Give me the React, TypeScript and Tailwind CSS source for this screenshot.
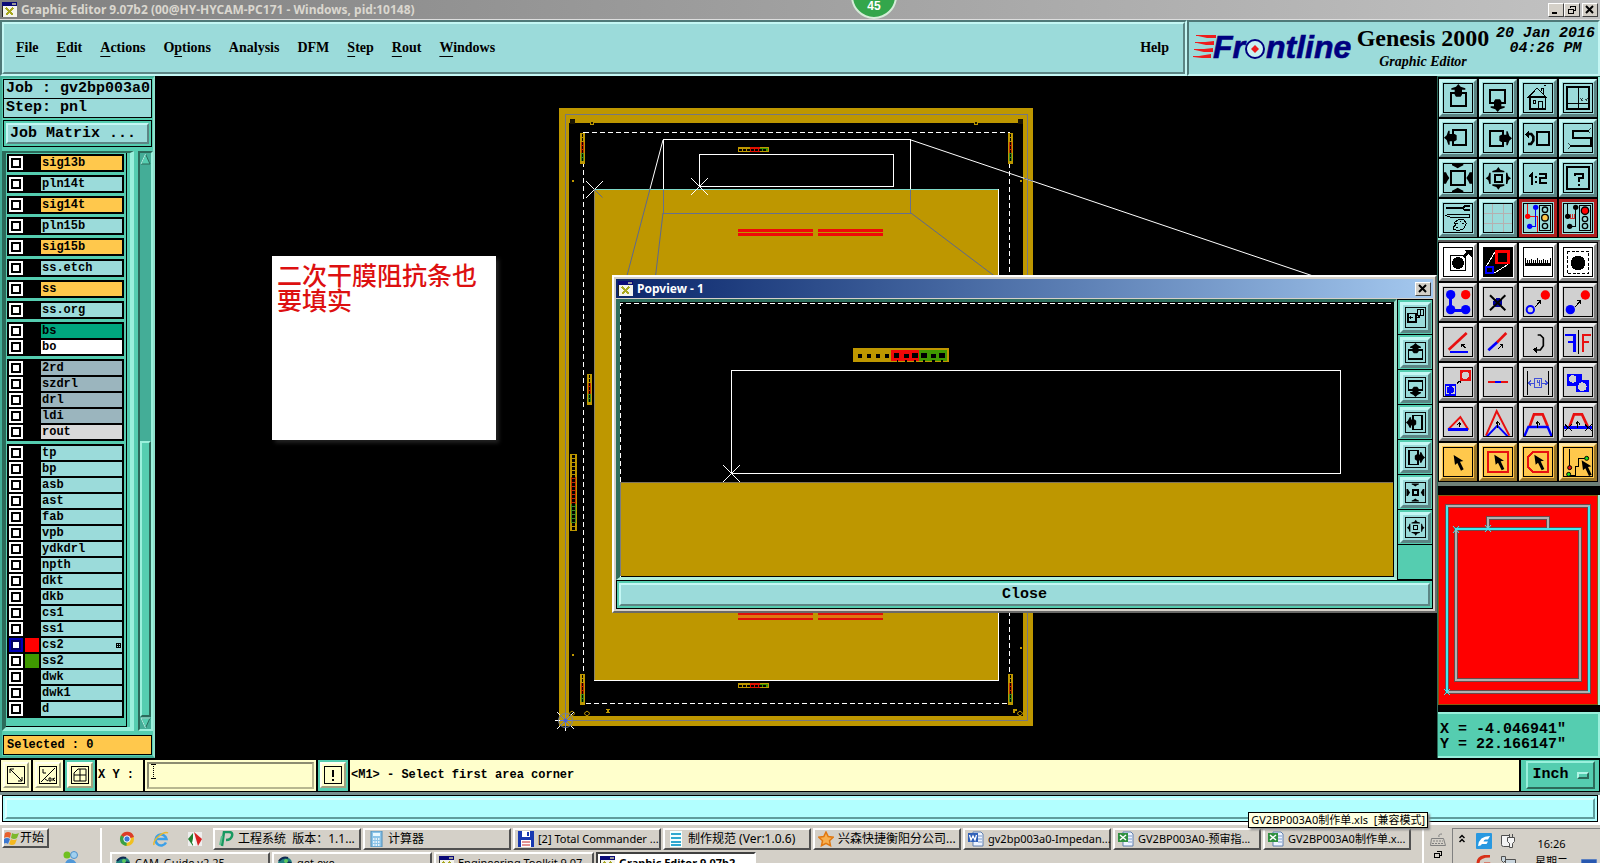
import { useState } from "react";
import type { ReactNode } from "react";

const MONO = "[font-family:'Liberation_Mono',monospace]";
const SERIF = "[font-family:'Liberation_Serif',serif]";
const TAHOMA = "[font-family:'Noto_Sans','Noto_Sans_CJK_SC',sans-serif]";
const CYAN_BEVEL =
  "border-t-[#c4f7f4] border-l-[#c4f7f4] border-r-[#5c8584] border-b-[#5c8584]";

/* ---------- Window chrome ---------- */

function AppIcon() {
  return (
    <svg width="15" height="15" viewBox="0 0 15 15" shapeRendering="crispEdges" className="shrink-0">
      <rect width="15" height="15" fill="#f4f4ec" stroke="#222" />
      <rect width="15" height="4" fill="#0a0a78" />
      <path d="M10 1h4v2h-4z" fill="#999" />
      <path d="M4 6l7 7M11 6l-7 7" stroke="#a8a820" strokeWidth="2" />
    </svg>
  );
}

function WinButton({ label, children }: { label: string; children: ReactNode }) {
  return (
    <button
      aria-label={label}
      className="flex h-[14px] w-4 items-center justify-center border border-t-white border-r-[#404040] border-b-[#404040] border-l-white bg-[#d4d0c8]"
    >
      <svg width="10" height="10" viewBox="0 0 10 10" fill="none" stroke="#000" shapeRendering="crispEdges">
        {children}
      </svg>
    </button>
  );
}

const closeGlyph = <path d="M1 1l7 7M8 1l-7 7" strokeWidth="2" shapeRendering="auto" />;

function TitleBar() {
  return (
    <div className="relative flex h-5 shrink-0 items-center border-b border-[#dedede] bg-linear-to-r from-[#808080] to-[#c2c2c2] pr-[2px] pl-[2px]">
      <AppIcon />
      <h1 className={`ml-1 text-[12px] leading-4 font-bold text-[#dad7cf] ${TAHOMA}`}>
        Graphic Editor 9.07b2 (00@HY-HYCAM-PC171 - Windows, pid:10148)
      </h1>
      <div className="ml-auto flex">
        <WinButton label="Minimize">
          <path d="M1 8h5" strokeWidth="2" />
        </WinButton>
        <WinButton label="Restore">
          <path d="M3 1h6M3.500 1v2M8.500 1v5M6 5.500h3M1 4h6M1.500 4v5M6.500 4v5M1 8.500h6" />
        </WinButton>
        <span className="w-[2px]" />
        <WinButton label="Close">{closeGlyph}</WinButton>
      </div>
      <div className="absolute bottom-0 left-1/2 z-10 flex size-[46px] translate-x-[51px] items-end justify-center rounded-full border-2 border-[#d5ecd8] bg-[#33a64b] pb-1 text-[12px] leading-[14px] font-bold text-white [font-family:'Liberation_Sans',sans-serif]">
        45
      </div>
    </div>
  );
}

/* ---------- Menu and branding ---------- */

const menus: [string, string, string][] = [
  ["", "F", "ile"],
  ["", "E", "dit"],
  ["", "A", "ctions"],
  ["O", "p", "tions"],
  ["Analysis", "", ""],
  ["DFM", "", ""],
  ["", "S", "tep"],
  ["", "R", "out"],
  ["", "W", "indows"],
];

function Logo() {
  return (
    <svg
      width="162"
      height="40"
      viewBox="0 -3 162 40"
      role="img"
      aria-label="Frontline"
      className="shrink-0 overflow-visible"
    >
      <g fill="#ee1c1c">
        <path d="M5 5l18-1v3H14zM4 12l17-2v4h-8zM2 19l18-2v4h-9zM0 26l18-3v4H9z" />
        <path d="M3 4.500h20M2 11.500h19M1 18.500h18M0 25.500h18" stroke="#ee1c1c" />
      </g>
      <g
        fill="#000080"
        fontFamily="'Liberation Sans',sans-serif"
        fontStyle="italic"
        fontWeight="bold"
        fontSize="32"
        stroke="#000080"
        strokeWidth="0.6"
      >
        <text x="20" y="27">Fr</text>
        <text x="73" y="27">ntline</text>
      </g>
      <circle cx="62" cy="18" r="9" fill="#c9f2f0" stroke="#000080" strokeWidth="2" />
      <path d="M62 14l4 4-4 4-4-4z" fill="#ee1c1c" />
    </svg>
  );
}

function Header() {
  return (
    <header className="flex h-14 shrink-0 bg-[#9bdbda] text-black">
      <div className="flex min-w-0 flex-1 border-2 border-t-[#4f7978] border-r-[#c4f7f4] border-b-[#c4f7f4] border-l-[#4f7978]">
        <nav className={`flex flex-1 items-center border-2 pr-[14px] pl-3 pb-[2px] text-[14px] font-bold ${CYAN_BEVEL} ${SERIF}`}>
          <div className="flex gap-[18px]">
            {menus.map(([pre, key, post]) => (
              <button key={pre + key + post}>
                {pre}
                <span className="underline underline-offset-4">{key}</span>
                {post}
              </button>
            ))}
          </div>
          <button className="ml-auto">Help</button>
        </nav>
      </div>
      <div className="flex w-[413px] shrink-0 items-center border-2 border-t-[#4f7978] border-r-[#c4f7f4] border-b-[#c4f7f4] border-l-[#4f7978] pl-1">
        <Logo />
        <div className={`w-[136px] shrink-0 text-center ${SERIF}`}>
          <div className="text-[24px] leading-7 font-bold">Genesis 2000</div>
          <div className="text-[14px] leading-5 font-bold italic">Graphic Editor</div>
        </div>
        <div className={`ml-[5px] h-11 shrink-0 text-center text-[15px] leading-[15px] font-bold italic ${MONO}`}>
          20 Jan 2016
          <br />
          04:26 PM
        </div>
      </div>
    </header>
  );
}

/* ---------- Layer list ---------- */

type Layer = { name: string; tone: string; swatch?: string; active?: boolean };
const A = "bg-[#ffc84c]";
const C = "bg-[#9bdbda]";
const S = "bg-[#9bb5be]";
const cyan = (name: string): Layer => ({ name, tone: C });

const groups: Layer[][] = [
  [{ name: "sig13b", tone: A }],
  [cyan("pln14t")],
  [{ name: "sig14t", tone: A }],
  [cyan("pln15b")],
  [{ name: "sig15b", tone: A }],
  [cyan("ss.etch")],
  [{ name: "ss", tone: A }],
  [cyan("ss.org")],
  [
    { name: "bs", tone: "bg-[#00a77e]" },
    { name: "bo", tone: "bg-white" },
  ],
  [
    { name: "2rd", tone: S },
    { name: "szdrl", tone: S },
    { name: "drl", tone: S },
    { name: "ldi", tone: S },
    { name: "rout", tone: "bg-[#d9d9d9]" },
  ],
  [
    ...["tp", "bp", "asb", "ast", "fab", "vpb", "ydkdrl", "npth", "dkt", "dkb", "cs1", "ss1"].map(cyan),
    { name: "cs2", tone: C, swatch: "bg-[#ff0000]", active: true },
    { name: "ss2", tone: C, swatch: "bg-[#3f9900]" },
    cyan("dwk"),
    cyan("dwk1"),
    cyan("d"),
  ],
];

function LayerRow({ layer }: { layer: Layer }) {
  return (
    <label className="flex h-[14px] gap-[2px]">
      <span className={`flex w-[14px] items-center justify-center ${layer.active ? "bg-[#0000b8]" : "bg-white"}`}>
        <input
          type="checkbox"
          className={`size-[10px] appearance-none border-2 bg-white ${layer.active ? "border-[#000060]" : "border-black"}`}
        />
      </span>
      <span className={`w-[14px] ${layer.swatch ?? ""}`} />
      <span className={`flex flex-1 items-center justify-between pl-px text-[12px] leading-[14px] ${layer.tone}`}>
        {layer.name}
        {layer.active && (
          <svg width="5" height="5" viewBox="0 0 5 5" className="mr-px" shapeRendering="crispEdges">
            <path d="M.5.5h4v4h-4zM2.500 0v5M0 2.500h5" fill="none" stroke="#000" />
          </svg>
        )}
      </span>
    </label>
  );
}

function LayerPanel() {
  return (
    <aside
      className={`flex w-[155px] shrink-0 flex-col border-2 border-t-[#44ad97] border-r-[#8fe0cc] border-b-[#44ad97] border-l-[#44ad97] bg-[#55cdb0] font-bold text-black ${MONO}`}
    >
      <div className="mx-px mt-px border border-black bg-[#9bdbda] text-[15px]">
        <div className="h-[19px] border-b border-black pl-[2px] leading-[18px] whitespace-nowrap">Job : gv2bp003a0</div>
        <div className="h-[18px] pl-[2px] leading-[18px]">Step: pnl</div>
      </div>
      <div className="mx-px mt-[2px] border border-black p-[2px]">
        <button
          className={`block h-[21px] w-full border-2 bg-[#9bdbda] pl-[2px] text-left text-[15px] leading-4 ${CYAN_BEVEL}`}
        >
          Job Matrix ...
        </button>
      </div>
      <div className="mt-1 flex min-h-0 flex-1">
        <div className="flex flex-1 border-t-2 border-r-4 border-b-4 border-l-4 border-t-[#2c6a5a] border-r-[#9af0dc] border-b-[#9af0dc] border-l-[#2c6a5a]">
          <div className="flex flex-1 flex-col gap-[3px] border-r border-b border-black pt-px pl-px">
            {groups.map((group, i) => (
              <div key={i} className="mr-[2px] flex flex-col gap-[2px] bg-black p-[2px]">
                {group.map((layer) => (
                  <LayerRow key={layer.name} layer={layer} />
                ))}
              </div>
            ))}
          </div>
          <div className="w-[3px]" />
        </div>
        <div className="ml-1 flex w-[15px] flex-col border-2 border-t-[#2c6a5a] border-r-[#9af0dc] border-b-[#9af0dc] border-l-[#2c6a5a] bg-[#44ad97]">
          <svg width="11" height="12" viewBox="0 0 11 12">
            <path d="M5.500 1L10 11H1z" fill="#55cdb0" stroke="#2c6a5a" />
            <path d="M5.500 1L1 11" stroke="#b0f5e6" />
          </svg>
          <div className="mt-auto h-[276px] border-t-2 border-r-2 border-b-2 border-l-2 border-t-[#9af0dc] border-r-[#2c6a5a] border-b-[#2c6a5a] border-l-[#9af0dc] bg-[#55cdb0]" />
          <svg width="11" height="12" viewBox="0 0 11 12">
            <path d="M5.500 11L10 1H1z" fill="#55cdb0" stroke="#2c6a5a" />
            <path d="M5.500 11L1 1h9" fill="none" stroke="#b0f5e6" />
          </svg>
        </div>
      </div>
      <div className="mx-px mt-1 mb-px h-5 border border-black bg-[#ffc84c] pl-[3px] text-[12px] leading-[18px]">
        Selected : 0
      </div>
    </aside>
  );
}

/* ---------- Board drawing ---------- */

function Coupon({ x, y, w, h, vertical }: { x: number; y: number; w: number; h: number; vertical?: boolean }) {
  const long = vertical ? h : w;
  const count = Math.floor(long / 4);
  return (
    <g>
      <rect x={x} y={y} width={w} height={h} fill="#be9700" />
      {vertical ? (
        <>
          <rect x={x + 1} y={y + h * 0.3} width={w - 2} height={h * 0.35} fill="#c03000" />
          <rect x={x + 1} y={y + h * 0.65} width={w - 2} height={h * 0.25} fill="#3f8a20" />
        </>
      ) : (
        <>
          <rect x={x + w * 0.4} y={y} width={w * 0.3} height={h} fill="#e01000" />
          <rect x={x + w * 0.7} y={y + 1} width={w * 0.27} height={h - 2} fill="#3f9900" />
        </>
      )}
      {Array.from({ length: count }, (_, i) => (
        <rect
          key={i}
          x={vertical ? x + 2 : x + 1 + i * 4}
          y={vertical ? y + 1 + i * 4 : y + 2}
          width={vertical ? w - 4 : 3}
          height={vertical ? 3 : 2}
          fill="#000"
        />
      ))}
    </g>
  );
}

function Board() {
  return (
    <svg className="absolute inset-0 h-full w-full" shapeRendering="crispEdges" fill="none">
      <g transform="translate(-155 -76)">
        <path d="M559 108h474v618H559zM569 123h454v593H569z" fill="#be9700" fillRule="evenodd" />
        <rect x="565.500" y="114.500" width="462" height="606" stroke="#747680" />
        <rect x="594" y="189" width="405" height="492" fill="#be9700" />
        <path d="M594.500 189.500v491" stroke="#8c8468" />
        <path d="M594 189.500h404" stroke="#7fd8c8" />
        <path d="M998.500 189v491.500H594" stroke="#fff" />
        <rect x="583.500" y="132.500" width="426" height="571" stroke="#fff" strokeDasharray="5 3" />
        <path d="M663.500 189V139.500h247V189M699.500 154.500h194v32h-194z" stroke="#fff" />
        <path d="M663.500 190v23.500h247V190" stroke="#667090" />
        <g shapeRendering="auto">
          <path d="M663 140L650 189M911 140L1393 303" stroke="#fff" />
          <path d="M650 189L620 302M663 213L620 577M911 213L1393 577" stroke="#5c6890" />
          <path d="M1024 178l9 3" stroke="#5c6890" />
          <path d="M586 181l8.500 8.500-8.500 8.500M603 181l-8.500 8.500M691 178l17 17M708 178l-17 17" stroke="#fff" />
          <path d="M594.500 189.500l8 8" stroke="#5c6890" />
        </g>
        <path d="M738 229h75v3h-75zM818 229h65v3h-65zM738 233h75v3h-75zM818 233h65v3h-65z" fill="#f00808" />
        <path d="M738 612h75v3h-75zM818 612h65v3h-65zM738 618h75v2h-75zM818 618h65v2h-65z" fill="#e01008" />
        <path d="M738 615h75v3h-75zM818 615h65v3h-65z" fill="#e07810" />
        <Coupon x={738} y={147} w={31} h={5} />
        <Coupon x={738} y={683} w={31} h={5} />
        <Coupon x={580} y={133} w={5} h={31} vertical />
        <Coupon x={1008} y={133} w={5} h={31} vertical />
        <Coupon x={580} y={674} w={5} h={31} vertical />
        <Coupon x={1008} y={674} w={5} h={31} vertical />
        <Coupon x={587} y={374} w={5} h={31} vertical />
        <Coupon x={570} y={454} w={7} h={77} vertical />
        <path
          d="M572 180h2v2h-2zM1020 180h2v2h-2zM572 654h2v2h-2zM1020 647h2v2h-2zM590 123h4v2h-4zM974 123h4v2h-4zM606 709h4v1h-1v2h1v1h-4v-1h1v-2h-1zM1013 709h4v2h-2v2h-2z"
          fill="#be9700"
        />
        <path d="M570 119h5v5h-5zM1018 119h5v5h-5z" fill="#1a1400" />
        <path d="M591 122h2v2h-2zM975 122h2v2h-2z" fill="#1a1400" />
        <g shapeRendering="auto">
          <path d="M587 711l3 2.500-3 2.500-3-2.500zM1020 711l3 2.500-3 2.500-3-2.500zM572 711l3 2.500-3 2.500-3-2.500z" stroke="#be9700" />
          <path d="M555 720.500h5M565.500 727v4M557 712l4 4M557 729l4-4M574 729l-4-4M574 712l-4 4" stroke="#fff" />
          <path d="M560 720.500h12M565.500 713v15M560 715l11 11M571 715l-11 11" stroke="#6078d0" />
          <circle cx="565.500" cy="720.500" r="7" stroke="#74809a" />
          <circle cx="565.500" cy="720.500" r="2" fill="#4060e0" />
        </g>
      </g>
    </svg>
  );
}

/* ---------- Icons on a 90-unit grid ---------- */

const arrowBox = (
  <>
    <path d="M24 30h45v39H24z" strokeWidth="6" />
    <path
      d="M46 3l7 8 14 5v4H57v15l-4 6H39l-4-6V20H25v-4l14-5z"
      fill="#000"
      stroke="none"
      shapeRendering="auto"
    />
  </>
);
const turn = (deg: number) => <g transform={`rotate(${deg} 45 45)`}>{arrowBox}</g>;

const popArrow = (deg: number) => (
  <g transform={`rotate(${deg} 45 45)`}>
    <path d="M15 36h60v36H15z" strokeWidth="8" />
    <path d="M45 4l9 9 14 7v6H58v16l-6 6H38l-6-6V26H22v-6l14-7z" fill="#000" stroke="none" shapeRendering="auto" />
  </g>
);

const pointer = (
  <path d="M34 28l4 30 7-6 11 23 8-4-11-23 10-2z" fill="#000" stroke="none" shapeRendering="auto" />
);
const outArrows = (
  <path
    d="M46 12l6 8 12 4v4H28v-4l12-4zM46 80l-6-8-12-4v-4h36v4l-12 4zM8 46l8-6 3-11h4v34h-4l-3-11zM84 46l-8-6-3-11h-4v34h4l3-11z"
    fill="#000"
    stroke="none"
    shapeRendering="auto"
  />
);
const inArrows = (
  <path
    d="M44 16l-8-5-9-4V2h34v5l-9 4zM44 74l-8 5-9 4v5h34v-5l-9-4zM19 45l-6-9-4-8H2v34h7l4-8zM70 45l6-9 4-8h7v34h-7l-4-8z"
    fill="#000"
    stroke="none"
    shapeRendering="auto"
  />
);
const arrowUp = <path d="M44 62V44M38 52l6-8 7 8" strokeWidth="3" />;
const diag = (x: number, y: number) => (
  <path d={`M${x} ${y + 20}l16-18M${x + 7} ${y}h10v10`} strokeWidth="3" />
);

const viewIcons: [string, ReactNode][] = [
  ["Pan up", arrowBox],
  ["Pan down", turn(180)],
  [
    "Home",
    <>
      <path d="M14 44L42 15l30 30M18 42h52M21 44v34h46V44" strokeWidth="4" />
      <path d="M18 78h51" strokeWidth="6" />
      <path d="M54 24V15h8v18M62 10l6-4M30 53h7v7h-7zM45 77V54h12v23" strokeWidth="3" />
    </>,
  ],
  [
    "Set coordinates",
    <>
      <path d="M12 12h66v66H12z" strokeWidth="6" />
      <path d="M46 12v66M12 60h66" strokeWidth="3" />
      <path d="M52 46l8 9M60 46l-8 9M65 46l4 4 4-4M69 50v5" strokeWidth="2" />
    </>,
  ],
  ["Pan left", turn(-90)],
  ["Pan right", turn(90)],
  [
    "Previous view",
    <>
      <path d="M42 27h36v39H42z" strokeWidth="6" />
      <path d="M13 33h12l6 8v12l-7 10h-9" strokeWidth="8" shapeRendering="auto" />
      <path d="M6 34l12-12v23z" fill="#000" stroke="none" />
    </>,
  ],
  [
    "Serpentine",
    <>
      <path d="M78 24H30v21h54v24H22" strokeWidth="6" />
      <path d="M76 24l6-8M76 24l6 6M24 69l-9-9M24 69l-9 8" strokeWidth="2" />
    </>,
  ],
  [
    "Zoom in",
    <>
      <path d="M24 24h42v42H24z" strokeWidth="6" />
      {inArrows}
    </>,
  ],
  [
    "Zoom out",
    <>
      <path d="M36 36h21v21H36z" strokeWidth="6" />
      {outArrows}
    </>,
  ],
  ["Zoom ratio", <path d="M18 42l9-9v33M39 39v6M39 54v6M48 33h21v12H51v15h21" strokeWidth="6" />],
  [
    "Query",
    <>
      <path d="M12 12h66v66H12z" strokeWidth="6" />
      <path d="M36 39v-6h24v12H48v12M48 62v7" strokeWidth="6" />
    </>,
  ],
  [
    "Options",
    <>
      <path d="M8 15h50" strokeWidth="8" />
      <path d="M80 9H66l-8 6 8 7h14" strokeWidth="6" />
      <path d="M8 37l12-4h59v9H20z" strokeWidth="3" />
      <path d="M34 58l14-9 15 1 7 12-8 15-16 6-14-4-1-8 8-5z" strokeWidth="3" />
      <path d="M40 62h5M50 56h5M58 62h4M38 72h6" strokeWidth="3" />
    </>,
  ],
  ["Grid", <path d="M29 3v84M60 3v84M3 30h84M3 60h84" stroke="#b5b0b0" strokeWidth="3" />],
  [
    "Net on",
    <>
      <path d="M14 0v40h28v48" stroke="#f01010" strokeWidth="3" />
      <path d="M38 14v56H20" stroke="#0000ff" strokeWidth="4" />
      <g stroke="none" shapeRendering="auto">
        <circle cx="14" cy="40" r="8" fill="#f00" />
        <circle cx="38" cy="13" r="8" fill="#00f" />
        <circle cx="20" cy="70" r="8" fill="#00f" />
      </g>
      <path d="M49 8h34v74H49z" strokeWidth="3" />
      <g strokeWidth="4" shapeRendering="auto">
        <circle cx="66" cy="20" r="8" />
        <circle cx="66" cy="44" r="10" fill="#ffc84c" />
        <circle cx="66" cy="69" r="8" />
      </g>
    </>,
  ],
  [
    "Net off",
    <>
      <path d="M14 0v40M38 14v56H20" strokeWidth="4" />
      <path d="M20 46h16M23 46V34M29 46V34M35 46V34" stroke="#d03030" strokeWidth="3" />
      <g fill="#000" stroke="none" shapeRendering="auto">
        <circle cx="14" cy="40" r="8" />
        <circle cx="38" cy="13" r="8" />
        <circle cx="20" cy="70" r="8" />
      </g>
      <path d="M49 8h34v74H49z" strokeWidth="3" />
      <g strokeWidth="4" shapeRendering="auto">
        <circle cx="66" cy="23" r="11" fill="#f00" />
        <circle cx="66" cy="48" r="8" />
        <circle cx="66" cy="69" r="8" />
      </g>
    </>,
  ],
];

const B = "#0000ff";
const R = "#e81010";

const editIcons: [string, string, ReactNode][] = [
  [
    "Feature select",
    "w",
    <>
      <path d="M23 26h44v44H23z" strokeWidth="3" />
      <circle cx="45" cy="48" r="18" fill="#000" stroke="none" />
      <path d="M62 30l14-14" strokeWidth="9" />
      <path d="M62 8h24v22z" fill="#000" stroke="none" />
    </>,
  ],
  [
    "Popview",
    "k",
    <>
      <path d="M0 0h90v90H0z" fill="#000" stroke="none" />
      <path d="M9 60L40 8M30 80l46-28" stroke="#fff" strokeWidth="3" />
      <path d="M40 13h36v34H40z" stroke="#f00" strokeWidth="7" />
      <path d="M10 60h19v19H10z" stroke={B} strokeWidth="6" />
    </>,
  ],
  [
    "Measure",
    "w",
    <>
      <path d="M7 51h76" strokeWidth="9" />
      <path
        d="M8 34v20M14 40v12M20 40v12M26 36v16M32 40v12M38 40v12M44 34v18M50 40v12M56 40v12M62 36v16M68 40v12M74 40v12M81 34v18"
        strokeWidth="3"
      />
    </>,
  ],
  [
    "Snap",
    "w",
    <>
      <path d="M12 13h64v66H12z" strokeWidth="3" strokeDasharray="9 5" />
      <circle cx="45" cy="48" r="22" fill="#000" stroke="none" />
    </>,
  ],
  [
    "Connect",
    "g",
    <>
      <path d="M23 23v46h44" stroke={B} strokeWidth="9" />
      <g stroke="none" fill={B} shapeRendering="auto">
        <circle cx="23" cy="23" r="14" />
        <circle cx="23" cy="68" r="14" />
        <circle cx="68" cy="68" r="14" />
        <circle cx="68" cy="23" r="14" fill="#f00" />
      </g>
    </>,
  ],
  [
    "Delete",
    "g",
    <>
      <circle cx="44" cy="47" r="14" fill="#000098" stroke="none" />
      <path d="M21 25l46 45M67 25L21 70" strokeWidth="6" shapeRendering="auto" />
    </>,
  ],
  [
    "Copy",
    "g",
    <>
      <circle cx="22" cy="68" r="11" stroke={B} strokeWidth="6" shapeRendering="auto" />
      <circle cx="67" cy="24" r="14" fill="#f00" stroke="none" shapeRendering="auto" />
      {diag(36, 40)}
    </>,
  ],
  [
    "Move",
    "g",
    <>
      <circle cx="22" cy="68" r="14" fill={B} stroke="none" shapeRendering="auto" />
      <circle cx="67" cy="24" r="14" fill="#f00" stroke="none" shapeRendering="auto" />
      {diag(36, 40)}
    </>,
  ],
  [
    "Angle",
    "g",
    <>
      <path d="M17 68l54-50" stroke={R} strokeWidth="8" shapeRendering="auto" />
      <path d="M20 75h54" stroke={B} strokeWidth="8" />
      <path d="M68 63L56 51M56 60v-9h9" strokeWidth="3" />
    </>,
  ],
  [
    "Stretch",
    "g",
    <>
      <path d="M16 70l28-26" stroke={B} strokeWidth="8" shapeRendering="auto" />
      <path d="M42 46l28-28" stroke={R} strokeWidth="8" shapeRendering="auto" />
      <path d="M46 66l12-13M50 53h9v9" strokeWidth="3" />
    </>,
  ],
  [
    "Rotate",
    "g",
    <>
      <path d="M44 24h8l9 9v23l-9 13H36" strokeWidth="5" shapeRendering="auto" />
      <path d="M30 68l11-9v18z" fill="#000" stroke="none" />
    </>,
  ],
  [
    "Mirror",
    "g",
    <>
      <path d="M7 24h27v51M14 45h20" stroke={B} strokeWidth="7" />
      <path d="M83 24H59v51M59 45h20" stroke={R} strokeWidth="7" />
      <path d="M46 10v72" strokeWidth="3" />
    </>,
  ],
  [
    "Change symbol",
    "g",
    <>
      <path d="M7 54h30v30H7z" stroke={B} strokeWidth="4" />
      <circle cx="22" cy="69" r="11" fill={B} stroke="none" />
      <path d="M50 8h34v34H50z" fill={R} stroke="none" />
      <circle cx="67" cy="25" r="11" fill="#d0d0d0" stroke="none" />
      <path d="M42 50l8-8M44 42h7v7" strokeWidth="3" />
    </>,
  ],
  [
    "Segment",
    "g",
    <>
      <path d="M14 45h62" stroke={R} strokeWidth="8" />
      <path d="M36 45h18" stroke={B} strokeWidth="8" />
    </>,
  ],
  [
    "Gap",
    "g",
    <>
      <path d="M14 13v70M77 13v70" strokeWidth="3" />
      <path
        d="M35 33h20v28H35zM17 48h18M55 48h19M24 41l-7 7 7 7M67 41l7 7-7 7M42 38v9h8M50 38v19"
        stroke="#4050d8"
        strokeWidth="3"
      />
    </>,
  ],
  [
    "Merge",
    "g",
    <>
      <path d="M12 20h44v18h21v38H40V58H12z" fill={B} stroke="none" />
      <circle cx="29" cy="36" r="11" fill="#d0d0d0" stroke="none" />
      <circle cx="58" cy="59" r="15" fill="#d0d0d0" stroke={B} strokeWidth="4" />
    </>,
  ],
  [
    "Peak",
    "g",
    <>
      <path d="M15 68l37-38 24 38" stroke={R} strokeWidth="6" shapeRendering="auto" />
      <path d="M14 68h62" stroke={B} strokeWidth="8" />
      <path d="M49 60V48M43 53l6-6 6 6" strokeWidth="3" />
    </>,
  ],
  [
    "Raise",
    "g",
    <>
      <path d="M9 86l32-74 38 74" stroke={R} strokeWidth="6" shapeRendering="auto" />
      <path d="M12 88l31-32 31 32" stroke={B} strokeWidth="6" shapeRendering="auto" />
      {arrowUp}
    </>,
  ],
  [
    "Trapezoid",
    "g",
    <>
      <path d="M20 58l13-36h26l15 36" stroke={R} strokeWidth="8" shapeRendering="auto" />
      <path d="M4 88l12-28h58l12 28" stroke={B} strokeWidth="7" shapeRendering="auto" />
      {arrowUp}
    </>,
  ],
  [
    "Trapezoid line",
    "g",
    <>
      <path d="M20 58l13-36h24l17 36" stroke={R} strokeWidth="8" shapeRendering="auto" />
      <path d="M3 61h84" stroke={B} strokeWidth="7" />
      <path d="M6 53l20 18M26 53L6 71M66 53l20 18M86 53L66 71" strokeWidth="3" />
      {arrowUp}
    </>,
  ],
  ["Select", "o", <g transform="translate(-2 -4)">{pointer}</g>],
  [
    "Select in frame",
    "o",
    <>
      <path d="M15 15h60v60H15z" stroke={R} strokeWidth="6" />
      <g transform="translate(0 -5)">{pointer}</g>
    </>,
  ],
  [
    "Select in polygon",
    "o",
    <>
      <path d="M31 15h44v60H31L15 60V29z" stroke={R} strokeWidth="6" />
      <g transform="translate(0 -5)">{pointer}</g>
    </>,
  ],
  [
    "Select net",
    "o",
    <>
      <path d="M20 6v56M17 84h20V58h8V34h24" strokeWidth="3" />
      <g strokeWidth="3" shapeRendering="auto">
        <circle cx="20" cy="62" r="6" fill={R} />
        <circle cx="17" cy="82" r="6" fill="#20e020" />
        <circle cx="71" cy="34" r="6" fill="#20e020" />
      </g>
      <g transform="translate(22 12)">{pointer}</g>
    </>,
  ],
];

const toneClass: Record<string, string> = {
  c: "bg-[#9bdbda] border-t-[#c4f7f4] border-l-[#c4f7f4] border-r-[#5c8584] border-b-[#5c8584]",
  r: "bg-[#9bdbda] border-[#b02020]",
  w: "bg-white border-t-white border-l-white border-r-[#8c8c8c] border-b-[#8c8c8c]",
  k: "bg-white border-t-white border-l-white border-r-[#8c8c8c] border-b-[#8c8c8c]",
  g: "bg-[#d0d0d0] border-t-[#ececec] border-l-[#ececec] border-r-[#7c7c7c] border-b-[#7c7c7c]",
  o: "bg-[#ffc84c] border-t-[#ffe6a4] border-l-[#ffe6a4] border-r-[#9a7628] border-b-[#9a7628]",
};

function ToolButton({ label, tone, children }: { label: string; tone: string; children: ReactNode }) {
  return (
    <button
      aria-label={label}
      className={`flex size-[38px] items-center justify-center border-[3px] ${toneClass[tone]}`}
    >
      <svg width="30" height="30" viewBox="0 0 90 90" fill="none" stroke="#000" shapeRendering="crispEdges">
        {children}
        {tone !== "k" && <path d="M1.500 1.500h87v87h-87z" strokeWidth="3" />}
      </svg>
    </button>
  );
}

function RightPanel() {
  return (
    <aside className="flex w-[163px] shrink-0 flex-col border-t border-l border-[#2c6a5a] bg-black">
      <div className="grid grid-cols-[repeat(4,38px)] gap-[2px] border-r-2 border-b-2 border-[#9af0dc] pt-[2px] pb-px pl-px">
        {viewIcons.map(([label, art], i) => (
          <ToolButton key={label} label={label} tone={i > 13 ? "r" : "c"}>
            {art}
          </ToolButton>
        ))}
      </div>
      <div className="grid grid-cols-[repeat(4,38px)] gap-[2px] border-t-2 border-r-2 border-b-4 border-t-[#5a5a5a] border-r-[#7c7c7c] border-b-[#6e8078] pt-px pb-px pl-px">
        {editIcons.map(([label, tone, art]) => (
          <ToolButton key={label} label={label} tone={tone}>
            {art}
          </ToolButton>
        ))}
      </div>
      <div className="mt-[9px] mb-[7px] min-h-0 flex-1 border-r-2 border-[#9af0dc]">
        <svg
          className="block h-full w-full"
          viewBox="0 0 160 210"
          preserveAspectRatio="none"
          fill="none"
          shapeRendering="crispEdges"
        >
          <rect width="160" height="210" fill="#ff0000" />
          <rect x="0.500" y="0.500" width="159" height="209" stroke="#8a5a10" />
          <g strokeWidth="4" stroke="#6a4a4a">
            <rect x="9" y="11" width="142" height="186" />
            <rect x="50" y="23" width="60" height="11" />
            <rect x="18" y="34" width="124" height="151" />
          </g>
          <g strokeWidth="2" stroke="#b0b0b0">
            <rect x="9" y="11" width="142" height="186" />
            <rect x="50" y="23" width="60" height="11" />
            <rect x="18" y="34" width="124" height="151" />
          </g>
          <path d="M9 11v186M151 11v186M17 34h125" stroke="#40e8f0" strokeWidth="2" />
          <path
            d="M15 31l6 7M21 31l-6 7M47 30l6 7M53 30l-6 7M6 194l6 6M12 194l-6 6"
            stroke="#40e8f0"
            shapeRendering="auto"
          />
        </svg>
      </div>
      <output
        className={`block h-[46px] border-t-2 border-r-2 border-b-2 border-t-[#9af0dc] border-r-[#9af0dc] border-b-[#9af0dc] bg-[#55cdb0] pt-2 pl-[2px] text-[15px] leading-[15px] font-bold whitespace-pre text-black ${MONO}`}
      >
        {'X = -4.046941"\nY = 22.166147"'}
      </output>
    </aside>
  );
}

/* ---------- Popview window ---------- */

const popIcons: [string, ReactNode][] = [
  [
    "Detach",
    <>
      <path d="M12 28h34v36H12z" strokeWidth="8" />
      <path d="M54 11h24v27H54zM66 12v22" strokeWidth="5" />
      <path d="M20 45h16M27 38l-7 7 7 7M46 45h14V38" strokeWidth="5" />
    </>,
  ],
  ["Up", popArrow(0)],
  ["Down", popArrow(180)],
  ["Left", popArrow(-90)],
  ["Right", popArrow(90)],
  [
    "Shrink",
    <>
      <path d="M35 35h20v20H35z" strokeWidth="6" />
      <g transform="translate(45 45) scale(0.9) translate(-45 -45)">{inArrows}</g>
    </>,
  ],
  [
    "Grow",
    <>
      <path d="M37 37h16v16H37z" strokeWidth="5" />
      {outArrows}
    </>,
  ],
];

function Popview() {
  return (
    <section
      aria-label="Popview"
      className="absolute top-[199px] right-0 left-[457px] flex h-[338px] flex-col border-2 border-t-white border-r-[#6a6a68] border-b-[#6a6a68] border-l-white bg-[#d4d0c8] p-[2px]"
    >
      <div className="flex h-[19px] shrink-0 items-center bg-linear-to-r from-[#0c266b] to-[#a5c9ef] px-[2px]">
        <AppIcon />
        <h2 className={`ml-1 text-[12px] leading-4 font-bold text-white ${TAHOMA}`}>Popview - 1</h2>
        <div className="ml-auto">
          <WinButton label="Close Popview">{closeGlyph}</WinButton>
        </div>
      </div>
      <div className="mt-px flex min-h-0 flex-1">
        <div className="min-w-0 flex-1 border-t-[3px] border-r-[3px] border-b-[3px] border-l-4 border-t-[#2f6e5d] border-r-[#9edfcd] border-b-[#b0f0dd] border-l-[#2f6e5d] bg-black">
          <svg className="block h-full w-full" fill="none" shapeRendering="crispEdges">
            <g transform="translate(-620 -302)">
              <path d="M620 482h773v94H620z" fill="#be9700" />
              <path d="M620 482.500h773" stroke="#80745c" />
              <path d="M620.500 578V303.500H1393" stroke="#fff" strokeDasharray="5 3" />
              <path d="M620.500 483v93" stroke="#7c7c80" />
              <path d="M731.500 370.500h609v103h-609z" stroke="#fff" />
              <path d="M723 465l17 17M740 465l-17 17" stroke="#fff" shapeRendering="auto" />
              <rect x="853" y="348" width="96" height="14" fill="#be9700" />
              <rect x="891" y="350" width="28" height="11" fill="#f00808" />
              <rect x="919" y="350" width="28" height="11" fill="#3f9900" />
              <path
                d="M858 354h4v4h-4zM867 354h4v4h-4zM876 354h4v4h-4zM885 354h4v4h-4zM894 353h5v5h-5zM904 354h5v4h-5zM912 353h6v5h-6zM921 353h6v5h-6zM931 354h5v4h-5zM939 353h6v5h-6zM897 360h1v2h-1zM905 360h2v2h-2zM914 360h2v2h-2zM923 360h2v2h-2zM932 360h3v2h-3zM941 360h2v2h-2z"
                fill="#000"
              />
            </g>
          </svg>
        </div>
        <div className="flex w-9 shrink-0 flex-col border border-black bg-[#55cdb0]">
          {popIcons.map(([label, art]) => (
            <div key={label} className="flex h-[35px] shrink-0 items-center justify-center border-b border-black">
              <button
                aria-label={label}
                className={`flex size-[31px] items-center justify-center border-[3px] bg-[#9bdbda] ${CYAN_BEVEL}`}
              >
                <svg width="21" height="21" viewBox="0 0 90 90" fill="none" stroke="#000" shapeRendering="crispEdges">
                  {art}
                  <path d="M2 2h86v86H2z" strokeWidth="4" />
                </svg>
              </button>
            </div>
          ))}
        </div>
      </div>
      <div className="shrink-0 border border-black bg-[#55cdb0] p-[2px]">
        <button
          className={`block h-[23px] w-full border-2 bg-[#9bdbda] text-[15px] leading-5 font-bold text-black ${CYAN_BEVEL} ${MONO}`}
        >
          Close
        </button>
      </div>
    </section>
  );
}

/* ---------- Status rows ---------- */

const CREAM_BEVEL = "border-t-[#fffff0] border-l-[#fffff0] border-r-[#a0a080] border-b-[#a0a080]";

function SmallTool({ label, active, children }: { label: string; active?: boolean; children: ReactNode }) {
  return (
    <div
      className={`flex h-[31px] w-[30px] shrink-0 items-center justify-center ${active ? "bg-[#55cdb0]" : "bg-[#ffffcc]"}`}
    >
      <button
        aria-label={label}
        className={`flex size-[26px] items-center justify-center border-2 bg-[#ffffcc] ${CREAM_BEVEL}`}
      >
        <svg width="18" height="18" viewBox="0 0 18 18" fill="none" stroke="#000">
          <path d="M.5.5h17v17H.5z" shapeRendering="crispEdges" />
          {children}
        </svg>
      </button>
    </div>
  );
}

function StatusBar() {
  const [xy, setXy] = useState("");
  return (
    <div className={`flex h-[34px] shrink-0 items-center gap-[2px] bg-black pl-px text-[12px] font-bold text-black ${MONO}`}>
      <SmallTool label="Line mode">
        <path d="M3 7V3h4M3 3l12 12M15 11v4h-4" />
      </SmallTool>
      <SmallTool label="Angle mode">
        <path d="M2 16L16 2M4 3v4h3M6 13l3 2M10 12h2v3h-2zM14 12v3M16 12l-2 1 2 2" />
      </SmallTool>
      <SmallTool label="Grid mode" active>
        <path d="M3 15V7l4-4h8v12zM9 3v12M3 9h12" />
      </SmallTool>
      <label htmlFor="xy" className="flex h-[31px] w-[46px] items-center bg-[#ffffcc] pl-px whitespace-pre">
        X Y :
      </label>
      <div className="relative flex h-[31px] w-[171px] items-center bg-[#ffffcc] px-[2px]">
        <input
          id="xy"
          value={xy}
          onChange={(e) => setXy(e.target.value)}
          className="h-[27px] w-full border-2 border-t-[#8c8c70] border-r-[#b8b890] border-b-[#b8b890] border-l-[#8c8c70] bg-[#ffffcc] px-1 outline-none"
        />
        <svg
          width="5"
          height="15"
          viewBox="0 0 5 15"
          className="pointer-events-none absolute top-1 left-[6px]"
          stroke="#000"
          shapeRendering="crispEdges"
        >
          <path d="M2.500 0v15" strokeDasharray="1 1" />
          <path d="M0 .5h2M3 .5h2M0 14.500h2M3 14.500h2" />
        </svg>
      </div>
      <SmallTool label="Apply" active>
        <path d="M9 4v7M9 13v2" strokeWidth="2" />
      </SmallTool>
      <output className="flex h-[31px] flex-1 items-center bg-[#ffffcc] pl-px">&lt;M1&gt; - Select first area corner</output>
      <div className="flex h-[31px] w-[79px] items-center justify-center border-r border-black bg-[#55cdb0]">
        <div className="relative flex items-center border-2 border-t-[#9af0dc] border-r-[#2c6a5a] border-b-[#2c6a5a] border-l-[#9af0dc]">
          <select
            aria-label="Units"
            className="h-6 w-[65px] appearance-none bg-transparent pl-[5px] text-[15px] font-bold outline-none"
          >
            <option>Inch</option>
            <option>mm</option>
          </select>
          <span className="pointer-events-none absolute right-1 h-[7px] w-3 border-2 border-t-[#b0f5e6] border-r-[#2c6a5a] border-b-[#2c6a5a] border-l-[#b0f5e6]" />
        </div>
      </div>
    </div>
  );
}

function MessageBar() {
  return (
    <div className="h-8 shrink-0 border-t-[3px] border-[#789090] bg-white px-[2px] pb-[2px]">
      <div className="h-full border border-black bg-[#b2ffff] p-[2px]">
        <div className="h-full border-2 border-t-[#dcffff] border-r-[#5f9d9d] border-b-[#5f9d9d] border-l-[#dcffff]" />
      </div>
    </div>
  );
}

/* ---------- Desktop taskbar ---------- */

function TaskIcon({ kind }: { kind: string }) {
  return (
    <svg width="16" height="16" viewBox="0 0 16 16" className="shrink-0">
      {kind === "start" && (
        <>
          <path d="M1 3q3-2 6 0L6 8Q3 6 0 8z" fill="#e8602c" />
          <path d="M8 3q3 2 7 0l-2 5q-3 2-6 0z" fill="#7cb82c" />
          <path d="M0 9q3-2 6 0l-2 5q-2-2-5 0z" fill="#3c78d0" />
          <path d="M7 9q3 2 6 0l-2 5q-3 2-6 0z" fill="#f4b820" />
        </>
      )}
      {kind === "chrome" && (
        <>
          <circle cx="8" cy="8" r="7" fill="#f0c020" />
          <path d="M8 8L2 4.500A7 7 0 0 1 15 6z" fill="#dc3c28" />
          <path d="M8 8L2 4.300A7 7 0 0 0 7.500 15z" fill="#38a048" />
          <circle cx="8" cy="8" r="3.200" fill="#3c78d8" stroke="#fff" />
        </>
      )}
      {kind === "ie" && (
        <>
          <path d="M13 11.500A5.500 5.500 0 1 1 13.500 8H4" fill="none" stroke="#3ca0e8" strokeWidth="2.500" />
          <path d="M1 14Q0 10 6 5t9-3" fill="none" stroke="#e8b830" strokeWidth="1.500" />
        </>
      )}
      {kind === "kite" && (
        <>
          <rect x="1" y="1" width="14" height="14" fill="#eee" />
          <path d="M7 1l8 7-4 7z" fill="#d82020" />
          <path d="M6 2L1 8l5 7z" fill="#208030" />
          <path d="M7 3l1 12-3-3z" fill="#fff" />
        </>
      )}
      {kind === "green" && (
        <>
          <path d="M4 15L6 1h5q4 0 3 4t-6 4" fill="none" stroke="#189860" strokeWidth="2.500" />
          <path d="M2 14l2-9" stroke="#60c090" strokeWidth="2" />
        </>
      )}
      {kind === "calc" && (
        <>
          <rect x="3" y="0" width="11" height="16" fill="#8cc4e8" stroke="#4c8cb8" />
          <path d="M5 2h7v3H5z" fill="#e8f8ff" />
          <path d="M5 8h7M5 11h7M5 14h7" stroke="#fff" strokeWidth="1.500" strokeDasharray="1.500 1" />
        </>
      )}
      {kind === "disk" && (
        <>
          <path d="M0 0h16v16H0z" fill="#1838b0" />
          <path d="M4 0h8v6H4zM3 9h10v7H3z" fill="#fff" />
          <path d="M4 11h8M4 14h8" stroke="#c82828" />
          <path d="M9 1h2v4H9z" fill="#1838b0" />
        </>
      )}
      {kind === "doc" && (
        <>
          <path d="M2 0h12v16H2z" fill="#f4ffff" />
          <path d="M3 3h10M3 7h10M3 11h10M3 14h10" stroke="#30a8d0" strokeWidth="2" />
        </>
      )}
      {kind === "star" && (
        <path
          d="M8 1l2.200 4.600 5 .6-3.700 3.500 1 5L8 12.300l-4.500 2.400 1-5L.8 6.200l5-.6z"
          fill="#f8b050"
          stroke="#e07810"
          strokeWidth="1.500"
        />
      )}
      {(kind === "word" || kind === "excel") && (
        <>
          <path d="M5 1h8l2 2v12H5z" fill="#eef4ff" stroke="#6080b0" />
          <path d="M10 5h4M10 8h4M10 11h4" stroke="#7898c8" />
          <rect x="0" y="2" width="10" height="9" fill={kind === "word" ? "#3060b8" : "#309040"} />
          {kind === "word" ? (
            <path d="M1.500 4l1.500 5 2-4 2 4 1.500-5" fill="none" stroke="#fff" strokeWidth="1.300" />
          ) : (
            <path d="M2 4l6 5M8 4L2 9" stroke="#fff" strokeWidth="1.500" />
          )}
        </>
      )}
      {kind === "bug" && (
        <>
          <ellipse cx="8" cy="8" rx="7" ry="6" fill="#208080" />
          <path d="M2 6q4-5 9-3M10 8q4-2 5 3" fill="none" stroke="#102850" strokeWidth="2" />
          <circle cx="9" cy="6" r="2" fill="#60c860" />
        </>
      )}
      {kind === "people" && (
        <>
          <circle cx="4" cy="4" r="3.500" fill="#70c020" />
          <circle cx="11" cy="4" r="3.500" fill="#a0d0f0" stroke="#5090c8" />
          <path d="M1 16q2-9 7-8t7 8z" fill="#5098d8" />
        </>
      )}
    </svg>
  );
}

const RAISED = "border-2 border-t-white border-l-white border-r-[#505050] border-b-[#505050] bg-[#d4d0c8]";

const CJK_SIZE = "text-[12px]";
const LATIN_SIZE = "text-[11px]";

const tasks: [string, string, string][] = [
  ["green", "工程系统  版本：1.1...", CJK_SIZE],
  ["calc", "计算器", CJK_SIZE],
  ["disk", "[2] Total Commander ...", LATIN_SIZE],
  ["doc", "制作规范 (Ver:1.0.6)", CJK_SIZE],
  ["star", "兴森快捷衡阳分公司...", CJK_SIZE],
  ["word", "gv2bp003a0-Impedan...", LATIN_SIZE],
  ["excel", "GV2BP003A0-预审指...", LATIN_SIZE],
  ["excel", "GV2BP003A0制作单.x...", LATIN_SIZE],
];

function Taskbar() {
  return (
    <footer
      className={`flex h-[39px] shrink-0 overflow-hidden border-t border-white bg-[#d4d0c8] pt-[3px] text-[12px] text-black ${TAHOMA}`}
    >
      <div className="flex w-[102px] shrink-0 flex-col gap-[3px] border-r-2 border-white pl-[2px]">
        <button className={`flex h-[22px] w-[47px] items-center ${RAISED}`}>
          <TaskIcon kind="start" />
          <span className="text-[12px] leading-4 whitespace-nowrap">开始</span>
        </button>
        <div className="pl-[61px]">
          <TaskIcon kind="people" />
        </div>
      </div>
      <div className="flex min-w-0 flex-1 flex-col gap-[2px] pl-2">
        <div className="flex h-[22px] items-center gap-[2px]">
          <div className="flex w-[101px] shrink-0 gap-[18px] pl-[9px]">
            <TaskIcon kind="chrome" />
            <TaskIcon kind="ie" />
            <TaskIcon kind="kite" />
          </div>
          {tasks.map(([kind, label, size]) => (
            <button
              key={label}
              className={`flex h-[22px] max-w-[148px] min-w-0 flex-1 items-center gap-1 pl-[3px] ${RAISED}`}
            >
              <TaskIcon kind={kind} />
              <span className={`leading-4 whitespace-pre ${size}`}>{label}</span>
            </button>
          ))}
        </div>
        <div className="flex h-[22px] gap-[2px]">
          {[
            ["bug", "CAM_Guide v2.25"],
            ["bug", "get.exe"],
            ["app", "Engineering Toolkit 9.07..."],
          ].map(([kind, label]) => (
            <button key={label} className={`flex h-[22px] w-40 shrink-0 items-center gap-1 pl-[3px] ${RAISED}`}>
              {kind === "app" ? <AppIcon /> : <TaskIcon kind={kind} />}
              <span className="text-[11px] leading-4 whitespace-nowrap">{label}</span>
            </button>
          ))}
          <button className="flex h-[22px] w-40 shrink-0 items-center gap-1 border-2 border-t-[#404040] border-r-white border-b-white border-l-[#404040] bg-white pl-[2px]">
            <AppIcon />
            <span className="text-[11px] leading-4 font-bold whitespace-nowrap">Graphic Editor 9.07b2</span>
          </button>
        </div>
      </div>
      <div className="flex w-[30px] shrink-0 flex-col items-center gap-1 border-l-2 border-white pt-[5px]">
        <svg width="16" height="14" viewBox="0 0 16 14" fill="none" stroke="#808080">
          <path d="M9 4q-1-3 3-3M1.500 5.500h12l2 7H.5z" />
          <path d="M3 8h10M2 10.500h12" strokeDasharray="2 1" />
        </svg>
        <svg width="8" height="7" viewBox="0 0 8 7" fill="none" stroke="#000" shapeRendering="crispEdges">
          <path d="M2.500.5h5v4h-2M.5 2.500h5v4h-5z" />
        </svg>
      </div>
      <div className="flex w-[148px] shrink-0 border-t border-l border-[#808080] pl-[6px]">
        <svg width="6" height="9" viewBox="0 0 6 9" fill="none" stroke="#000" strokeWidth="1.500" className="mt-[5px]">
          <path d="M.5 4L3 1.500 5.500 4M.5 8L3 5.500 5.500 8" />
        </svg>
        <div className="ml-[11px] grid grid-cols-2 gap-x-2 gap-y-[6px] pt-1">
          <svg width="16" height="16" viewBox="0 0 16 16">
            <rect width="16" height="16" rx="1" fill="#2898e0" />
            <path d="M2 13q1-10 12-10l-2 3.500H9.500q-1.500 0-2 2H12L10.500 11H6q-1 2-4 2z" fill="#fff" />
          </svg>
          <svg width="16" height="16" viewBox="0 0 16 16" fill="#f4f4f4" stroke="#505050">
            <path d="M1.500 2.500h8v11h-6q-2 0-2-2z" />
            <path d="M7.500 4.500h7v4l-2 2v4h-3v-4l-2-2zM9.500 4V1M12.500 4V1" />
          </svg>
          <svg width="16" height="16" viewBox="0 0 16 16">
            <path d="M14 1Q2 1 2 8t7 7q5-1 4-6H8" fill="none" stroke="#d83018" strokeWidth="3" />
          </svg>
          <svg width="16" height="16" viewBox="0 0 16 16" fill="#c8d4dc" stroke="#505050">
            <path d="M5.500 4.500h10v7h-10zM1.500 1.500h4v4l-2 2-2-2z" />
          </svg>
        </div>
        <div className="ml-[19px] pt-[6px] text-center text-[11px] leading-[18px] whitespace-nowrap">
          16:26
          <br />
          星期二
        </div>
        <svg width="16" height="12" viewBox="0 0 16 12" className="mt-[30px] ml-[13px]">
          <rect width="16" height="12" fill="#2858b0" stroke="#90a8d0" />
        </svg>
      </div>
    </footer>
  );
}

export default function App() {
  return (
    <div className="relative flex h-screen flex-col overflow-hidden bg-black">
      <TitleBar />
      <Header />
      <main className="flex min-h-0 flex-1">
        <LayerPanel />
        <div className="relative min-w-0 flex-1 overflow-hidden bg-black">
          <Board />
          <div className="absolute top-[180px] left-[117px] h-[184px] w-[224px] bg-white px-[5px] py-[6px] text-[25px] leading-[25px] font-medium text-[#dd1010] shadow-[3px_3px_4px_#222] [font-family:'Noto_Sans_CJK_SC',sans-serif]">
            二次干膜阻抗条也要填实
          </div>
          <Popview />
        </div>
        <RightPanel />
      </main>
      <StatusBar />
      <MessageBar />
      <Taskbar />
      <div
        role="tooltip"
        className={`absolute right-[172px] bottom-[35px] h-4 border border-black bg-[#ffffe1] px-[2px] text-[11px] leading-[14px] whitespace-pre text-black shadow-[2px_2px_2px_#888] ${TAHOMA}`}
      >
        GV2BP003A0制作单.xls  [兼容模式]
      </div>
    </div>
  );
}
